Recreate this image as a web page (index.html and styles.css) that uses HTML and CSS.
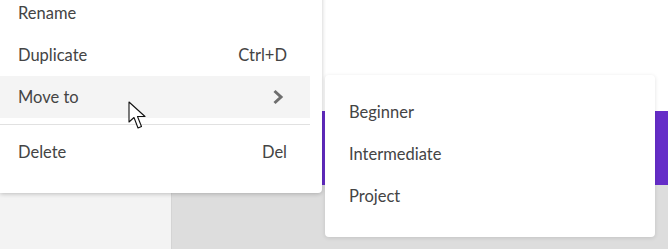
FILE: index.html
```html
<!DOCTYPE html>
<html lang="en">
<head>
    <meta charset="UTF-8">
    <link rel="stylesheet" href="styles.css">
    <title>Menu</title>
</head>
<body>
    <div class="page">
        <div class="sidebar"></div>
        <div class="main">
            <div class="topbar"></div>
            <div class="banner"></div>
            <div class="content"></div>
        </div>
    </div>

    <div class="menu">
        <div class="item"><span>Rename</span></div>
        <div class="item"><span>Duplicate</span><span class="shortcut">Ctrl+D</span></div>
        <div class="item active"><span>Move to</span>
            <svg class="chevron" width="12" height="16" viewBox="0 0 12 16"><path d="M2.5 2 L9 8 L2.5 14" fill="none" stroke="#6e6e6e" stroke-width="3"/></svg>
        </div>
        <div class="divider"></div>
        <div class="item"><span>Delete</span><span class="shortcut">Del</span></div>
    </div>

    <div class="submenu">
        <div class="item"><span>Beginner</span></div>
        <div class="item"><span>Intermediate</span></div>
        <div class="item"><span>Project</span></div>
    </div>

    <svg class="cursor" width="22" height="30" viewBox="0 0 22 30">
        <path d="M1 1 L1 21 L6 16.5 L10 27 L13.5 25.5 L9.5 15.5 L17 15.5 Z" fill="#fff" stroke="#111" stroke-width="1.1" stroke-linejoin="round"/>
    </svg>
</body>
</html>
```

FILE: styles.css
```css
body {
    margin: 0;
    font-family: Lato, "Open Sans", sans-serif;
    color: #444;
    overflow: hidden;
}

.page {
    display: flex;
    height: 249px;
}

.sidebar {
    width: 171px;
    background: #f3f3f3;
    border-right: 1px solid #d4d4d4;
}

.main {
    flex: 1;
    display: flex;
    flex-direction: column;
}

.topbar {
    height: 111px;
    background: #fff;
}

.banner {
    height: 74px;
    background: #652dc8;
}

.content {
    flex: 1;
    background: #dddddd;
}

.menu {
    position: absolute;
    left: 0;
    top: -8px;
    width: 310px;
    padding: 0 12px 20px 0;
    background: #fff;
    border-radius: 0 0 4px 0;
    box-shadow: 0 1px 4px rgba(0, 0, 0, 0.22);
}

.item {
    display: flex;
    align-items: center;
    justify-content: space-between;
    height: 42px;
    padding: 0 23px 0 18px;
    font-size: 16.5px;
}

.item.active {
    background: #f4f4f4;
}

.chevron {
    margin-right: 3px;
}

.divider {
    height: 1px;
    margin: 6px 0;
    background: #e1e1e1;
}

.submenu {
    position: absolute;
    left: 325px;
    top: 75px;
    width: 330px;
    padding: 16px 0 20px;
    background: #fff;
    border-radius: 4px;
    box-shadow: 0 1px 4px rgba(0, 0, 0, 0.12);
}

.submenu .item {
    padding: 0 24px;
}

.cursor {
    position: absolute;
    left: 128px;
    top: 101px;
}
```
